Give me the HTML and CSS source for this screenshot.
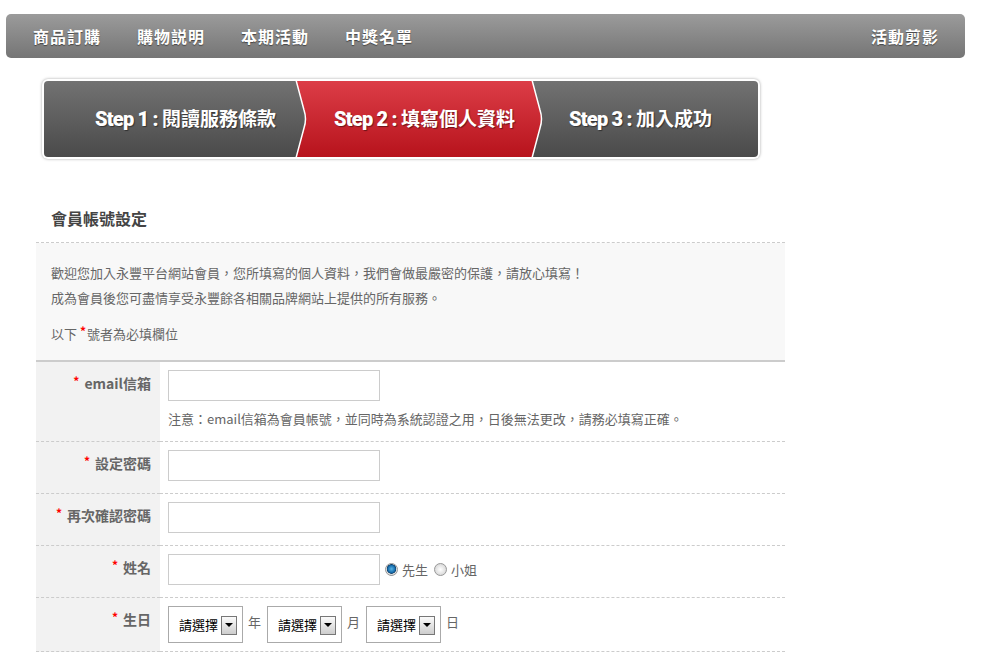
FILE: index.html
```html
<!DOCTYPE html>
<html lang="zh-Hant">
<head>
	<meta charset="UTF-8">
	<title>會員帳號設定</title>
	<link rel="stylesheet" href="styles.css">
</head>
<body>
	<div class="topnav">
		<ul class="menu">
			<li>商品訂購</li>
			<li>購物説明</li>
			<li>本期活動</li>
			<li>中獎名單</li>
		</ul>
		<span class="menu-right">活動剪影</span>
	</div>

	<div class="steps">
		<div class="steps-in">
			<svg class="steps-bg" width="714" height="76" viewBox="0 0 714 76">
				<defs>
					<linearGradient id="gGray" x1="0" y1="0" x2="0" y2="1">
						<stop offset="0" stop-color="#727272"/>
						<stop offset="1" stop-color="#4a4a4a"/>
					</linearGradient>
					<linearGradient id="gRed" x1="0" y1="0" x2="0" y2="1">
						<stop offset="0" stop-color="#dc3d47"/>
						<stop offset="1" stop-color="#b7131c"/>
					</linearGradient>
				</defs>
				<rect width="714" height="76" fill="url(#gGray)"/>
				<path d="M252,0 H488 L496,29 Q499,38 496,47 L488,76 H252 L260,47 Q263,38 260,29 Z" fill="url(#gRed)"/>
				<path d="M252,-1 L260,29 Q263,38 260,47 L252,77" fill="none" stroke="#fff" stroke-width="1.5"/>
				<path d="M488,-1 L496,29 Q499,38 496,47 L488,77" fill="none" stroke="#fff" stroke-width="1.5"/>
			</svg>
			<ol class="steps-list">
				<li class="s1"><b>Step 1 :</b> 閱讀服務條款</li>
				<li class="s2"><b>Step 2 :</b> 填寫個人資料</li>
				<li class="s3"><b>Step 3 :</b> 加入成功</li>
			</ol>
		</div>
	</div>

	<div class="member">
		<h2 class="title">會員帳號設定</h2>
		<div class="intro">
			<p>歡迎您加入永豐平台網站會員，您所填寫的個人資料，我們會做最嚴密的保護，請放心填寫！<br>成為會員後您可盡情享受永豐餘各相關品牌網站上提供的所有服務。</p>
			<p>以下 <span class="req">*</span>號者為必填欄位</p>
		</div>
		<table class="form">
			<tr>
				<th><span class="req">*</span>email信箱</th>
				<td>
					<input class="text" type="text">
					<p class="note">注意：email信箱為會員帳號，並同時為系統認證之用，日後無法更改，請務必填寫正確。</p>
				</td>
			</tr>
			<tr>
				<th><span class="req">*</span>設定密碼</th>
				<td><input class="text" type="password"></td>
			</tr>
			<tr>
				<th><span class="req">*</span>再次確認密碼</th>
				<td><input class="text" type="password"></td>
			</tr>
			<tr>
				<th><span class="req">*</span>姓名</th>
				<td class="line">
					<input class="text" type="text">
					<label class="opt"><input type="radio" name="sex" checked>先生</label>
					<label class="opt"><input type="radio" name="sex">小姐</label>
				</td>
			</tr>
			<tr class="birth">
				<th><span class="req">*</span>生日</th>
				<td class="line">
					<div class="pick">請選擇<i class="arr"></i></div><span class="unit">年</span>
					<div class="pick">請選擇<i class="arr"></i></div><span class="unit">月</span>
					<div class="pick">請選擇<i class="arr"></i></div><span class="unit">日</span>
				</td>
			</tr>
		</table>
	</div>
</body>
</html>
```

FILE: styles.css
```css
body{margin:0;background:#fff;color:#666;font-family:"Noto Sans CJK TC","Liberation Sans",sans-serif;font-size:13px;}

/* top menu */
.topnav{display:flex;justify-content:space-between;align-items:center;box-sizing:border-box;width:959px;height:44px;margin:14px 0 0 6px;padding:0 26px 0 27px;border-radius:5px;background:linear-gradient(#9b9b9b,#757575);}
.menu{display:flex;gap:36px;margin:0;padding:0;list-style:none;}
.menu li,.menu-right{color:#fff;font-size:16px;font-weight:bold;letter-spacing:1px;line-height:20px;text-shadow:0 1px 1px #444;}

/* step bar */
.steps{width:714px;height:76px;margin:21px 0 0 42px;padding:2px;border-radius:6px;background:#fff;box-shadow:0 0 3px rgba(0,0,0,.35);}
.steps-in{display:grid;height:76px;border-radius:4px;overflow:hidden;}
.steps-bg,.steps-list{grid-area:1/1;}
.steps-bg{display:block;}
.steps-list{display:flex;align-items:center;margin:0;padding:0 0 4px;list-style:none;}
.steps-list li{box-sizing:border-box;white-space:nowrap;color:#fff;font-size:19px;font-weight:bold;text-shadow:1px 1px 1px rgba(0,0,0,.45);}
.steps-list b{font-family:Roboto,"Liberation Sans",sans-serif;font-size:20px;letter-spacing:-0.8px;}
.s1{width:253px;padding-left:51px;}
.s2{width:236px;padding-left:37px;}
.s3{width:225px;padding-left:36px;}

/* member block */
.member{width:749px;margin:47px 0 0 36px;}
.title{margin:0;padding:0 0 12px 15px;color:#444;font-size:16px;line-height:24px;border-bottom:1px dashed #ccc;}
.intro{padding:17px 15px 14px;background:#f8f8f8;border-bottom:2px solid #ccc;}
.intro p{margin:0;line-height:25px;}
.intro p+p{margin-top:11px;}
.req{color:#f00;font-size:12px;font-weight:bold;line-height:0;vertical-align:3px;margin-right:5px;}
.intro .req{margin-right:1px;}

.form{width:100%;border-collapse:collapse;}
.form tr{border-bottom:1px dashed #ccc;}
.form th{width:115px;padding:6px 9px 0 0;background:#f2f2f2;text-align:right;vertical-align:top;color:#666;font-size:14px;font-weight:bold;line-height:31px;white-space:nowrap;}
.form td{padding:8px 0 12px 8px;vertical-align:top;}
.form .birth td{padding-bottom:8px;}
.form td.line{display:flex;align-items:center;}
.text{display:block;box-sizing:border-box;width:212px;height:31px;margin:0;padding:0 5px;border:1px solid #ccc;background:#fff;}
.note{margin:8px 0 0;line-height:20px;}

.opt{display:flex;align-items:center;gap:4px;margin-left:5px;line-height:20px;}
.opt+.opt{margin-left:6px;}
.opt input{appearance:none;width:13px;height:13px;margin:0;border:1px solid #999;border-radius:50%;background:radial-gradient(#fff,#ccc);}
.opt input:checked{background:radial-gradient(circle at 50% 45%,#59b6e8 0,#1469a8 45%,#0b3c66 55%,#e6e6e6 62%,#bbb 100%);}

.pick{display:flex;align-items:center;box-sizing:border-box;width:75px;height:37px;padding-left:10px;border:1px solid #aaa;background:#fff;color:#000;font-size:13px;}
.arr{display:flex;align-items:center;justify-content:center;box-sizing:border-box;width:16px;height:19px;margin:1px 5px 0 auto;border:1px solid #777;background:linear-gradient(#fbfbfb,#cdcdcd);}
.arr::after{content:"";border:4px solid transparent;border-top-color:#000;border-bottom:0;}
.unit{align-self:flex-start;margin:6px 6px 0 5px;line-height:20px;}
```
